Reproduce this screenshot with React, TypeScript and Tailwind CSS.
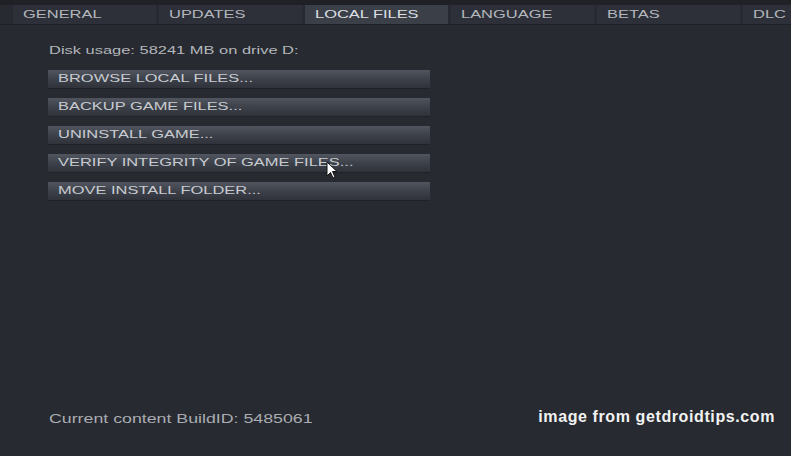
import React from "react";

const tabs = ["GENERAL", "UPDATES", "LOCAL FILES", "LANGUAGE", "BETAS", "DLC"];
const actions = [
  "BROWSE LOCAL FILES...",
  "BACKUP GAME FILES...",
  "UNINSTALL GAME...",
  "VERIFY INTEGRITY OF GAME FILES...",
  "MOVE INSTALL FOLDER...",
];

// the screenshot is stretched sideways, so the Steam text is widened to match
const wide = "inline-block origin-left scale-x-[1.43] whitespace-nowrap";

export default function App() {
  return (
    <div
      className="relative w-[791px] h-[456px] overflow-hidden bg-[#272a30] text-[#c3c6cb]"
      style={{ fontFamily: '"Liberation Sans", Arial, sans-serif' }}
    >
      {/* Tabs */}
      <div className="h-[5px] bg-[#1f2126]" />
      <div className="flex gap-[3px] pl-[13px] h-[20px] border-b border-[#1e2025]">
        {tabs.map((t) => (
          <div
            key={t}
            className={`w-[143px] shrink-0 flex items-center pl-[10px] text-[11.5px] leading-none ${
              t === "LOCAL FILES" ? "bg-[#3a3f48] text-[#dcdfe3]" : "bg-[#2d3038] text-[#b3b6bc]"
            }`}
          >
            <span className={wide}>{t}</span>
          </div>
        ))}
      </div>

      {/* Content */}
      <div className="pl-[49px] pt-[20px]">
        <div className="text-[11.5px] text-[#b4b7bc] leading-none">
          <span className={wide}>Disk usage: 58241 MB on drive D:</span>
        </div>
        <div className="mt-[13px] flex flex-col gap-[9px] w-[382px] -ml-[1px]">
          {actions.map((a) => (
            <div
              key={a}
              className="h-[19px] flex items-center pl-[10px] text-[11.5px] text-[#c8cbd0] bg-gradient-to-b from-[#50555f] via-[#3d414a] to-[#2f3239] border-b border-[#1f2227]"
            >
              <span className={wide}>{a}</span>
            </div>
          ))}
        </div>
      </div>

      {/* Mouse cursor */}
      <svg className="absolute left-[326px] top-[161px]" width="12" height="18" viewBox="0 0 12 18">
        <path d="M1 1 L1 15 L4.5 11.5 L7 17 L9 16 L6.5 10.5 L11 10.5 Z" fill="#ffffff" stroke="#111" strokeWidth="1" />
      </svg>

      {/* Footer */}
      <div className="absolute left-0 right-0 bottom-[30px] flex items-end justify-between pl-[49px] pr-[16px]">
        <div className="text-[12px] text-[#a9acb2] leading-none mb-[1px]">
          <span className="inline-block origin-left scale-x-[1.48] whitespace-nowrap">Current content BuildID: 5485061</span>
        </div>
        <div className="text-[16px] tracking-[0.6px] font-bold text-[#f2f2f2] leading-none mb-[1px]">image from getdroidtips.com</div>
      </div>
    </div>
  );
}
